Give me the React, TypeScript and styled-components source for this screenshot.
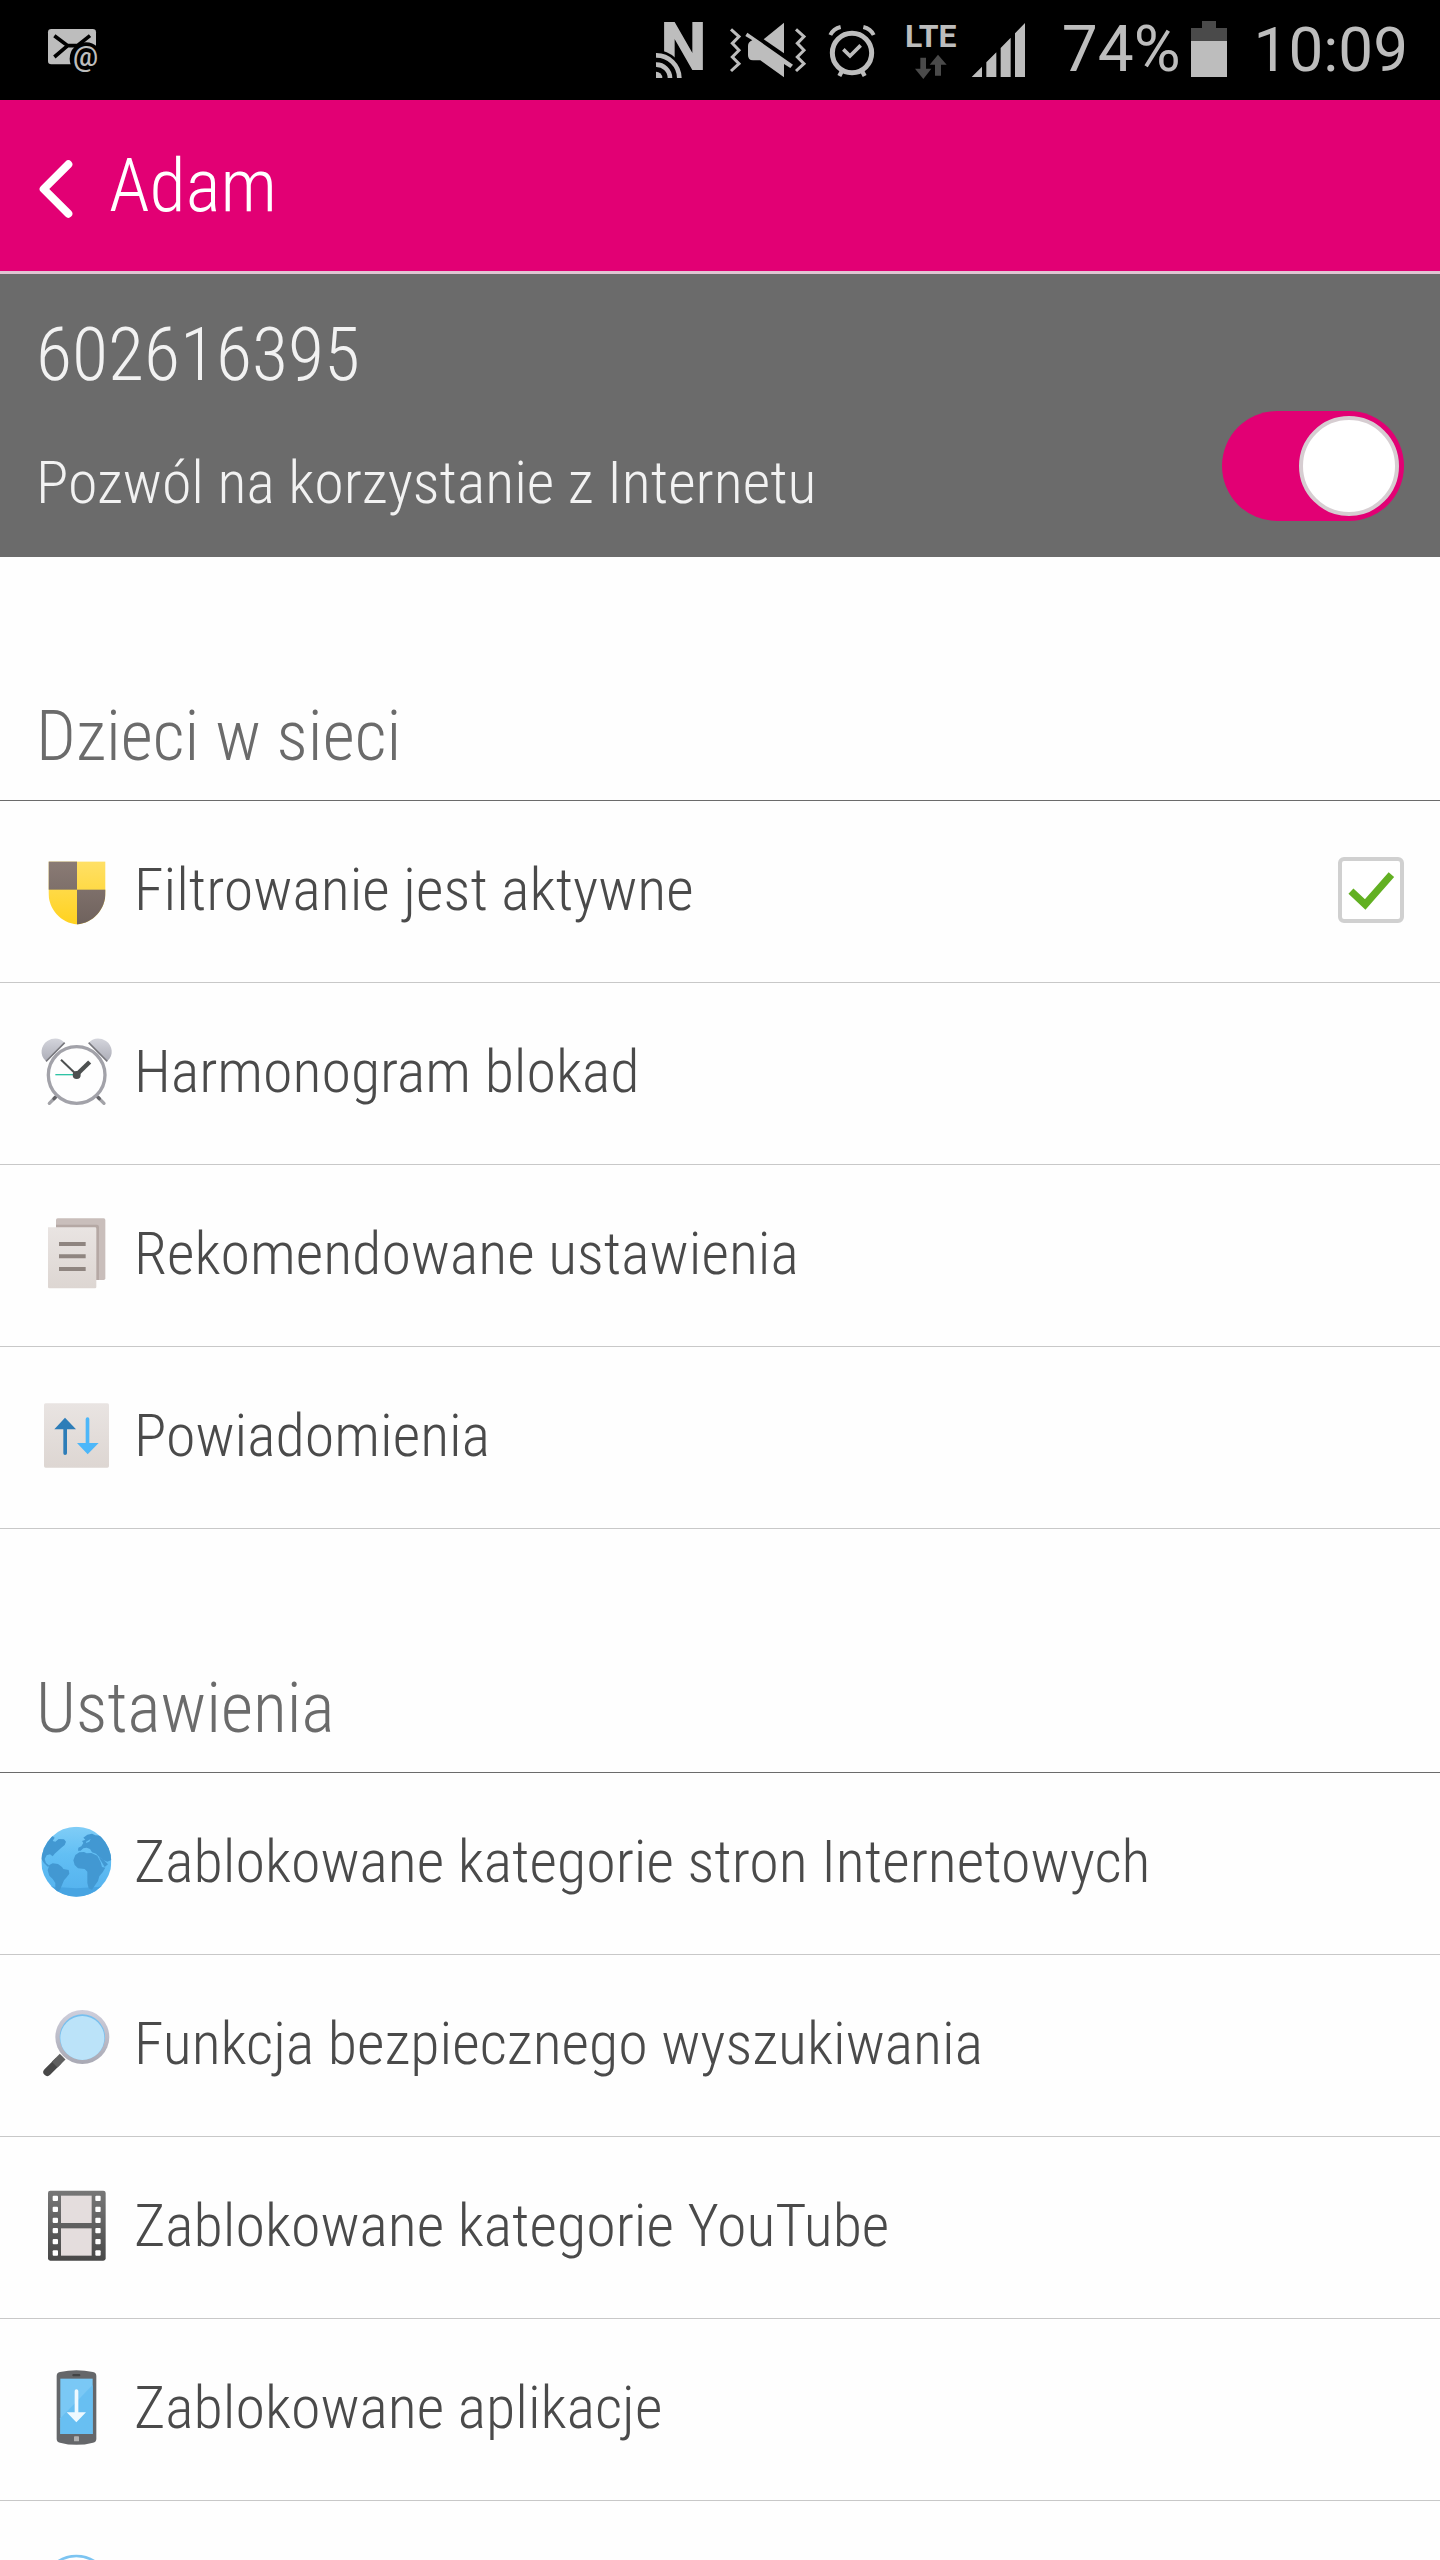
import React from "react";
import styled, { createGlobalStyle } from "styled-components";

const magenta = "#e20074";
const statusGrey = "#bdbdbd";
const statusDim = "#4a4a4a";

const GlobalStyle = createGlobalStyle`
  *, *::before { box-sizing: border-box; }
  body {
    margin: 0;
    background: #fefefe;
    font-family: "Roboto Condensed", Roboto, "Liberation Sans", sans-serif;
    font-weight: 300;
  }
`;

const Screen = styled.div`
  display: flex;
  flex-direction: column;
  height: 100vh;
  overflow: hidden;
`;

const StatusBar = styled.div`
  display: flex;
  flex: none;
  align-items: center;
  justify-content: space-between;
  height: 100px;
  padding: 0 32px 0 48px;
  background: #000;
  color: ${statusGrey};
  font-family: Roboto, "Liberation Sans", sans-serif;
  font-weight: 400;
`;

const StatusIcons = styled.div`
  display: flex;
  align-items: center;
  gap: 12px;
`;

const StatusGlyph = styled.svg`
  display: block;
  height: 60px;
  overflow: visible;
`;

const Network = styled.div`
  display: flex;
  flex-direction: column;
  align-items: center;
  width: 56px;
  height: 60px;
  margin-left: 10px;
  font-size: 32px;
  line-height: 32px;
  font-weight: 700;
`;

const Battery = styled.div`
  display: flex;
  align-items: center;
  gap: 10px;
  margin-left: 24px;
`;

const StatusText = styled.span`
  font-size: 64px;
  line-height: 76px;
`;

const Clock = styled.span`
  margin-left: 15px;
  font-size: 62px;
  line-height: 76px;
`;

const TitleBar = styled.header`
  display: flex;
  flex: none;
  align-items: center;
  gap: 33px;
  height: 174px;
  padding: 0 36px;
  background: ${magenta};
  border-bottom: 3px solid #e0c4d2;
  color: #fff;
`;

const BackButton = styled.button`
  display: block;
  padding: 6px 0 0;
  border: 0;
  background: none;
  color: inherit;
  svg { display: block; }
`;

const Title = styled.h1`
  margin: 0;
  font-size: 74px;
  line-height: 84px;
  font-weight: 300;
`;

const AccountPanel = styled.section`
  display: flex;
  flex: none;
  align-items: flex-end;
  justify-content: space-between;
  padding: 39px 36px 36px;
  background: #6b6b6b;
  color: #f2f2f2;
`;

const AccountText = styled.div`
  display: flex;
  flex-direction: column;
  gap: 51px;
  padding-bottom: 3px;
`;

const PhoneNumber = styled.div`
  font-size: 74px;
  line-height: 84px;
`;

const AccessLabel = styled.label`
  font-size: 60px;
  line-height: 70px;
`;

const Toggle = styled.input`
  appearance: none;
  display: flex;
  flex: none;
  align-items: center;
  width: 182px;
  height: 110px;
  margin: 0;
  padding: 5px;
  border-radius: 55px;
  background: #a5a5a5;
  &::before {
    content: "";
    width: 100px;
    height: 100px;
    border: 4px solid #d6cdd1;
    border-radius: 50%;
    background: #fff;
  }
  &:checked {
    justify-content: flex-end;
    background: ${magenta};
  }
`;

const Group = styled.section`
  flex: none;
`;

const GroupTitle = styled.h2`
  display: flex;
  align-items: flex-end;
  height: 244px;
  margin: 0;
  padding: 0 36px 22px;
  border-bottom: 1px solid #6b6b6b;
  color: #6b6b6b;
  font-size: 70px;
  line-height: 84px;
  font-weight: 300;
`;

const List = styled.ul`
  margin: 0;
  padding: 0;
  list-style: none;
`;

const Row = styled.li`
  border-bottom: 1px solid #c8c8c8;
`;

const RowButton = styled.button`
  display: flex;
  align-items: center;
  gap: 20px;
  width: 100%;
  height: 181px;
  padding: 0 36px 4px 38px;
  border: 0;
  background: none;
  color: #4a4a4a;
  font: inherit;
  font-size: 60px;
  font-weight: 350;
  line-height: 70px;
  text-align: left;
`;

const RowIcon = styled.svg`
  display: block;
  flex: none;
  width: 76px;
  height: 76px;
`;

const RowLabel = styled.span`
  flex: 1;
`;

const CheckWrap = styled.span`
  display: grid;
  flex: none;
  width: 66px;
  height: 66px;
  > * { grid-area: 1 / 1; }
  svg { pointer-events: none; visibility: hidden; }
  input:checked + svg { visibility: visible; }
`;

const Check = styled.input`
  appearance: none;
  width: 66px;
  height: 66px;
  margin: 0;
  border: 4px solid #d0d0d0;
  border-radius: 6px;
  background: #fff;
`;

/* ---- status bar drawings ---- */

const MailGlyph = () => (
  <StatusGlyph width="51" viewBox="144 60 153 180" aria-hidden>
    <rect x="144" y="87" width="144" height="106" rx="10" fill={statusGrey} />
    <path d="M163 107 L203 137 H232 L270 107 M203 137 L163 171" fill="none" stroke="#000" strokeWidth="11" />
    <circle cx="258" cy="176" r="49" fill="#000" />
    <text x="219" y="198" fontSize="84" fontWeight="500" fontFamily="Roboto, sans-serif" fill={statusGrey}>@</text>
  </StatusGlyph>
);

const NfcGlyph = () => (
  <StatusGlyph width="58" viewBox="42 60 174 180" aria-hidden>
    <text x="64" y="210" fontSize="198" fontWeight="800" fontFamily="Roboto, sans-serif" fill={statusGrey}>N</text>
    <path d="M42 150 H51 A84 84 0 0 1 135 234 V240 H42 Z" fill="#000" />
    <g fill="none" stroke={statusGrey} strokeWidth="14">
      <path d="M51 166 A69 69 0 0 1 121 234" />
      <path d="M51 194 A41 41 0 0 1 93 234" />
    </g>
    <path d="M51 215 A19 19 0 0 1 70 234 H51 Z" fill={statusGrey} />
  </StatusGlyph>
);

const VibrateGlyph = () => (
  <StatusGlyph width="88" viewBox="252 60 264 180" aria-hidden>
    <g fill="none" stroke={statusGrey} strokeWidth="9">
      <path d="M276 88 L300 110 L280 130 L300 151 L280 171 L300 191 L276 213" />
      <path d="M471 88 L495 110 L475 130 L495 151 L475 171 L495 191 L471 213" />
    </g>
    <path d="M435 68 V160 L374 118 Z" fill={statusGrey} />
    <path d="M325 98 L462 194 L454 204 L435 192 V232 L364 181 H342 Q327 181 327 166 V138 Q327 126 340 121 L319 108 Z" fill={statusGrey} />
  </StatusGlyph>
);

const AlarmGlyph = () => (
  <StatusGlyph width="58" viewBox="552 60 174 180" aria-hidden>
    <g fill="none" stroke={statusGrey}>
      <circle cx="639" cy="159" r="59" strokeWidth="15" />
      <path d="M613 148 L633 168 L665 136" strokeWidth="11" />
      <path d="M574 105 Q583 86 605 81 M704 105 Q695 86 673 81" strokeWidth="12" />
      <path d="M609 213 L601 228 M669 213 L677 228" strokeWidth="13" />
    </g>
  </StatusGlyph>
);

const DataArrows = () => (
  <svg width="32" height="28" viewBox="834 156 96 84" aria-hidden>
    <path d="M850 173 H867 V206 H883 L859 237 L834 206 H850 Z M903 164 L929 194 H912 V227 H894 V194 H878 Z" fill={statusDim} />
  </svg>
);

const SignalGlyph = () => (
  <StatusGlyph width="55" viewBox="993 60 165 180" aria-hidden>
    <path d="M995 231 L1026 200 V231 Z M1039 187 L1069 157 V231 H1039 Z M1082 144 L1112 113 V231 H1082 Z M1125 100 L1155 69 V231 H1125 Z" fill={statusGrey} />
  </StatusGlyph>
);

const BatteryGlyph = () => (
  <StatusGlyph width="36" viewBox="450 60 108 180" aria-hidden>
    <path d="M483 63 H525 V84 H558 V123 H450 V84 H483 Z" fill={statusDim} />
    <rect x="450" y="123" width="108" height="108" fill={statusGrey} />
  </StatusGlyph>
);

/* ---- list icons ---- */

const ShieldIcon = () => (
  <RowIcon viewBox="0 0 228 228" aria-hidden>
    <defs>
      <clipPath id="shield"><path d="M31 28 H203 V118 C203 175 165 212 117 218 C69 212 31 175 31 118 Z" /></clipPath>
      <linearGradient id="gold" x1="0" y1="28" x2="0" y2="218" gradientUnits="userSpaceOnUse">
        <stop offset="0" stopColor="#ffe066" /><stop offset="1" stopColor="#ffd21f" />
      </linearGradient>
      <linearGradient id="taupe" x1="0" y1="28" x2="0" y2="218" gradientUnits="userSpaceOnUse">
        <stop offset="0" stopColor="#8a7b75" /><stop offset="1" stopColor="#6f625d" />
      </linearGradient>
    </defs>
    <g clipPath="url(#shield)">
      <rect x="31" y="28" width="172" height="190" fill="url(#gold)" />
      <rect x="31" y="28" width="86" height="85" fill="url(#taupe)" />
      <rect x="117" y="113" width="86" height="105" fill="url(#taupe)" />
    </g>
  </RowIcon>
);

const AlarmIcon = () => (
  <RowIcon viewBox="54 44 228 228" aria-hidden>
    <defs>
      <linearGradient id="bell" x1="0" y1="0" x2="0" y2="1">
        <stop offset="0" stopColor="#d4d5dc" /><stop offset="1" stopColor="#adaeb8" />
      </linearGradient>
    </defs>
    <g strokeWidth="10" strokeLinecap="round">
      <path d="M104 236 L88 252 M236 236 L252 252" stroke="#a3a3a8" />
      <path d="M107 233 L102 238 M233 233 L238 238" stroke="#626266" />
    </g>
    <path d="M77 124 C58 108 62 78 82 65 C100 53 122 56 132 69 Z" fill="url(#bell)" />
    <path d="M263 124 C282 108 278 78 258 65 C240 53 218 56 208 69 Z" fill="url(#bell)" />
    <path d="M78 126 L134 70 M262 126 L206 70" stroke="#77777d" strokeWidth="5" />
    <circle cx="170" cy="167" r="85" fill="#fefefe" stroke="#a2a2a9" strokeWidth="10" />
    <path d="M106 166 H168" stroke="#2fc3a5" strokeWidth="4" />
    <path d="M123 121 L170 166" stroke="#4d5050" strokeWidth="6" />
    <path d="M170 166 L209 128" stroke="#4d5050" strokeWidth="13" />
    <circle cx="170" cy="167" r="12" fill="#4d5050" />
  </RowIcon>
);

const DocumentsIcon = () => (
  <RowIcon viewBox="54 588 228 228" aria-hidden>
    <defs>
      <linearGradient id="paper" x1="0" y1="0" x2="0" y2="1">
        <stop offset="0" stopColor="#e9e4e2" /><stop offset="1" stopColor="#ddd6d2" />
      </linearGradient>
    </defs>
    <rect x="108" y="595" width="148" height="185" rx="5" fill="#c9bebb" />
    <path d="M108 614 H230 Q237 614 237 621 V780 H108 Z" fill="#b5a8a4" />
    <path d="M84 622 H225 Q229 622 229 626 V801 Q229 805 225 805 H88 Q84 805 84 801 Z" fill="url(#paper)" />
    <path d="M117 672 H197 M117 709 H197 M117 747 H197" stroke="#8f8580" strokeWidth="12" />
  </RowIcon>
);

const TransferIcon = () => (
  <RowIcon viewBox="54 1133 228 228" aria-hidden>
    <rect x="72" y="1149" width="195" height="193" rx="5" fill="url(#paper)" />
    <path d="M135 1192 L168 1227 H141 V1299 Q141 1304 135 1304 Q130 1304 130 1299 V1227 H103 Z" fill="#2d7db8" />
    <path d="M203 1302 L171 1268 H197 V1196 Q197 1191 203 1191 Q208 1191 208 1196 V1268 H236 Z" fill="#4db7f9" />
  </RowIcon>
);

const GlobeIcon = () => (
  <RowIcon viewBox="54 133 228 228" aria-hidden>
    <defs>
      <clipPath id="globe"><circle cx="169" cy="246" r="105" /></clipPath>
      <linearGradient id="sea" x1="0" y1="0" x2="0" y2="1">
        <stop offset="0" stopColor="#80cdf7" /><stop offset="0.4" stopColor="#62bff4" /><stop offset="1" stopColor="#53b1ee" />
      </linearGradient>
    </defs>
    <g clipPath="url(#globe)">
      <rect x="64" y="141" width="210" height="210" fill="url(#sea)" />
      <path d="M64 316 Q169 336 274 316 V352 H64 Z" fill="#47a4e2" />
      <g fill="#4298d2">
        <path d="M64 170 L96 168 L104 174 L98 184 L106 186 L116 178 L132 179 L138 186 L134 196 L124 204 L114 213 L104 222 L98 230 L90 224 L80 227 L74 238 L78 250 L88 258 L84 262 L72 250 L60 232 Z" />
        <path d="M88 256 L98 251 L114 253 L126 262 L130 268 L146 271 L148 282 L140 293 L132 302 L126 316 L120 330 L112 336 L106 328 L106 310 L98 298 L88 288 L83 272 Z" />
        <path d="M174 213 L175 204 L184 200 L190 190 L186 184 L196 180 L190 174 L202 165 L216 162 L226 167 L244 168 L276 204 V240 L262 246 L248 240 L238 232 L228 222 L216 218 L210 208 L200 204 L190 206 L182 213 Z" />
        <path d="M160 242 L166 226 L178 218 L192 217 L200 221 L214 220 L232 228 L242 248 L246 262 L256 264 L248 278 L238 290 L234 304 L224 318 L216 330 L206 326 L202 310 L202 276 L194 268 L174 266 L164 256 Z" />
      </g>
      <path d="M198 186 L212 178 L208 186 L198 190 Z" fill="#64bff4" />
      <path d="M236 232 L254 262 L264 254 L250 240 Z" fill="#4298d2" />
    </g>
  </RowIcon>
);

const SearchIcon = () => (
  <RowIcon viewBox="54 678 228 228" aria-hidden>
    <defs>
      <linearGradient id="ring" x1="0" y1="0" x2="0" y2="1">
        <stop offset="0" stopColor="#cfcfdc" /><stop offset="1" stopColor="#a9a9b4" />
      </linearGradient>
    </defs>
    <path d="M82 876 L112 846" stroke="#484848" strokeWidth="24" strokeLinecap="round" />
    <path d="M104 854 L128 830" stroke="#606060" strokeWidth="24" />
    <circle cx="187" cy="771" r="81" fill="url(#ring)" />
    <circle cx="187" cy="771" r="68" fill="#77c0ef" />
    <circle cx="187" cy="774" r="66" fill="#bbe3f9" />
  </RowIcon>
);

const filmHoles = [105, 138, 171, 202, 235, 269];

const FilmIcon = () => (
  <RowIcon viewBox="54 82 228 228" aria-hidden>
    <defs>
      <linearGradient id="film" x1="0" y1="0" x2="0" y2="1">
        <stop offset="0" stopColor="#777" /><stop offset="1" stopColor="#484848" />
      </linearGradient>
    </defs>
    <rect x="84" y="90" width="173" height="210" rx="7" fill="url(#film)" />
    <rect x="123" y="105" width="92" height="82" fill="#e4dddd" />
    <rect x="123" y="203" width="92" height="82" fill="#e4dddd" />
    {filmHoles.map((y) => (
      <g key={y} fill="#fff">
        <rect x="98" y={y} width="16" height="16" rx="3" />
        <rect x="226" y={y} width="16" height="16" rx="3" />
      </g>
    ))}
  </RowIcon>
);

const PhoneIcon = () => (
  <RowIcon viewBox="54 627 228 228" aria-hidden>
    <path d="M110 645 Q110 635 120 633 Q169 622 219 633 Q229 635 229 645 V834 Q229 843 219 845 Q169 858 120 845 Q110 843 110 834 Z" fill="#65676a" />
    <rect x="121" y="653" width="97" height="166" fill="#7ac8f5" />
    <path d="M218 672 L121 772 V819 H218 Z" fill="#68bff2" />
    <path d="M164 690 Q164 685 169 685 Q175 685 175 690 V754 H198 L169 784 L140 754 H164 Z" fill="#eef9ff" />
    <rect x="157" y="639" width="24" height="7" rx="3" fill="#414345" />
    <rect x="162" y="826" width="15" height="15" rx="2" fill="#b1b1b1" />
  </RowIcon>
);

const RoundIcon = () => (
  <RowIcon viewBox="54 1172 228 228" aria-hidden>
    <circle cx="169" cy="1284" r="100" fill="#fefefe" stroke="#7cc4f1" strokeWidth="8" />
  </RowIcon>
);

type Entry = { label: string; Icon: () => React.ReactElement };

const network: Entry[] = [
  { label: "Harmonogram blokad", Icon: AlarmIcon },
  { label: "Rekomendowane ustawienia", Icon: DocumentsIcon },
  { label: "Powiadomienia", Icon: TransferIcon },
];

const settings: Entry[] = [
  { label: "Zablokowane kategorie stron Internetowych", Icon: GlobeIcon },
  { label: "Funkcja bezpiecznego wyszukiwania", Icon: SearchIcon },
  { label: "Zablokowane kategorie YouTube", Icon: FilmIcon },
  { label: "Zablokowane aplikacje", Icon: PhoneIcon },
  { label: "", Icon: RoundIcon },
];

const Entries = ({ items }: { items: Entry[] }) => (
  <>
    {items.map(({ label, Icon }) => (
      <Row key={label}>
        <RowButton type="button">
          <Icon />
          <RowLabel>{label}</RowLabel>
        </RowButton>
      </Row>
    ))}
  </>
);

export default function App() {
  return (
    <Screen>
      <GlobalStyle />
      <StatusBar>
        <MailGlyph />
        <StatusIcons>
          <NfcGlyph />
          <VibrateGlyph />
          <AlarmGlyph />
          <Network>
            LTE
            <DataArrows />
          </Network>
          <SignalGlyph />
          <Battery>
            <StatusText>74%</StatusText>
            <BatteryGlyph />
          </Battery>
          <Clock>10:09</Clock>
        </StatusIcons>
      </StatusBar>
      <TitleBar>
        <BackButton type="button">
          <svg width="40" height="60" viewBox="108 477 120 180" aria-hidden>
            <path d="M205 493 L131 567 L205 641" fill="none" stroke="currentColor" strokeWidth="24" strokeLinecap="round" strokeLinejoin="round" />
          </svg>
        </BackButton>
        <Title>Adam</Title>
      </TitleBar>
      <AccountPanel>
        <AccountText>
          <PhoneNumber>602616395</PhoneNumber>
          <AccessLabel htmlFor="access">Pozwól na korzystanie z Internetu</AccessLabel>
        </AccountText>
        <Toggle id="access" type="checkbox" role="switch" defaultChecked />
      </AccountPanel>
      <Group>
        <GroupTitle>Dzieci w sieci</GroupTitle>
        <List>
          <Row>
            <RowButton as="label" htmlFor="filter">
              <ShieldIcon />
              <RowLabel>Filtrowanie jest aktywne</RowLabel>
              <CheckWrap>
                <Check id="filter" type="checkbox" defaultChecked />
                <svg width="66" height="66" viewBox="0 0 199 199" aria-hidden>
                  <path d="M39 103 L82 143 L161 53" fill="none" stroke="#62b022" strokeWidth="22" />
                </svg>
              </CheckWrap>
            </RowButton>
          </Row>
          <Entries items={network} />
        </List>
      </Group>
      <Group>
        <GroupTitle>Ustawienia</GroupTitle>
        <List>
          <Entries items={settings} />
        </List>
      </Group>
    </Screen>
  );
}
